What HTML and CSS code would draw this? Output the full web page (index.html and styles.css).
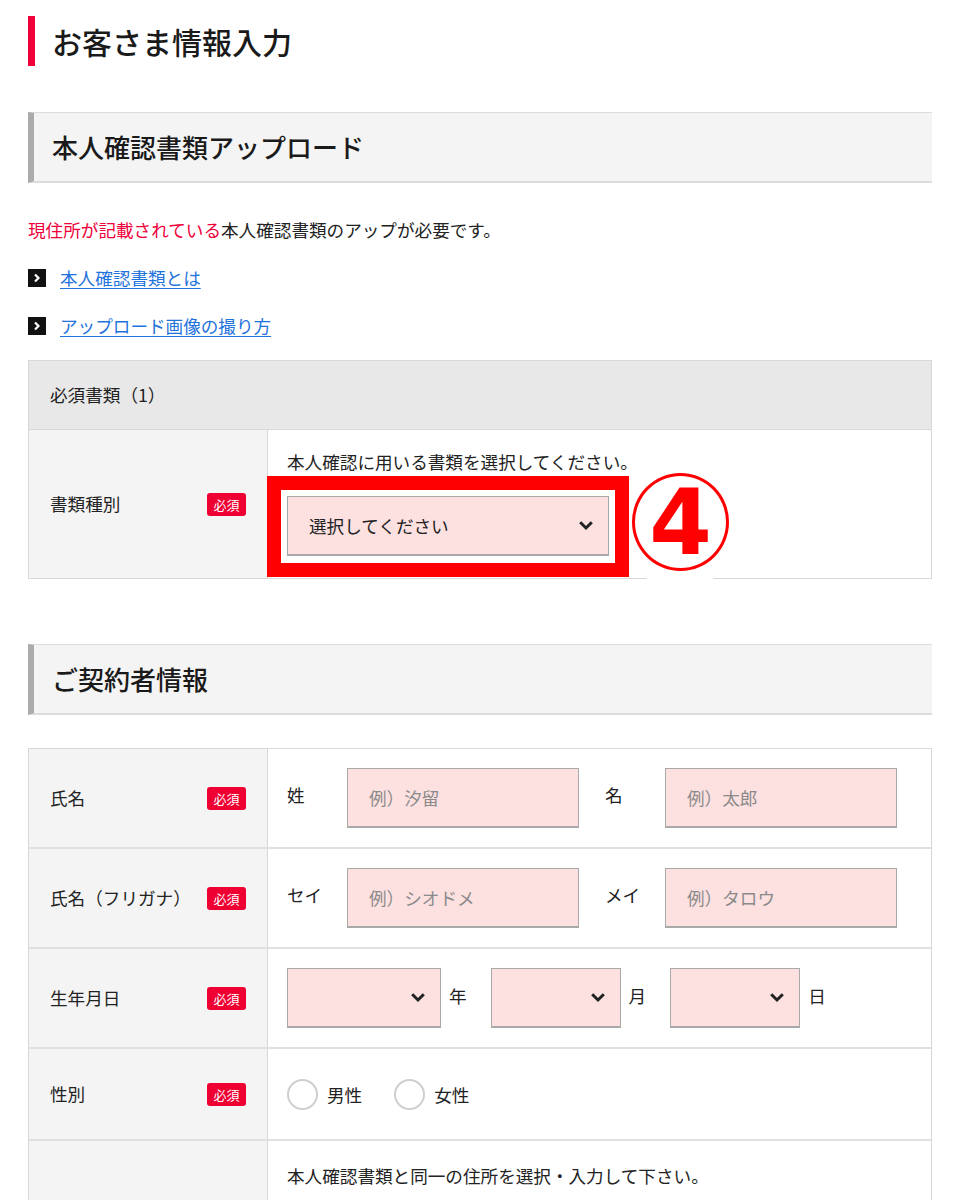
FILE: index.html
```html
<!DOCTYPE html>
<html lang="ja">
<head>
<meta charset="utf-8">
<title>お客さま情報入力</title>
<link rel="stylesheet" href="styles.css">
</head>
<body>
<main class="page">
  <h1 class="page-title">お客さま情報入力</h1>

  <section class="section">
    <h2 class="sec-head">本人確認書類アップロード</h2>
    <p class="note"><span class="em-red">現住所が記載されている</span>本人確認書類のアップが必要です。</p>
    <ul class="links">
      <li><span class="arrow-ic"><svg viewBox="0 0 18 18" width="18" height="18"><path d="M7 5.5 L10.5 9 L7 12.5" fill="none" stroke="#fff" stroke-width="2.2"/></svg></span><a href="#">本人確認書類とは</a></li>
      <li><span class="arrow-ic"><svg viewBox="0 0 18 18" width="18" height="18"><path d="M7 5.5 L10.5 9 L7 12.5" fill="none" stroke="#fff" stroke-width="2.2"/></svg></span><a href="#">アップロード画像の撮り方</a></li>
    </ul>

    <div class="ftable">
      <div class="ft-head">必須書類（1）</div>
      <div class="ft-row">
        <div class="ft-label"><span>書類種別</span><span class="badge">必須</span></div>
        <div class="ft-value doc-value">
          <p class="hint">本人確認に用いる書類を選択してください。</p>
          <div class="mark-wrap">
            <div class="select sel-doc"><span>選択してください</span><svg class="chev" viewBox="0 0 16 11" width="16" height="11"><path d="M2.2 2.2 L8 8 L13.8 2.2" fill="none" stroke="#222" stroke-width="3"/></svg></div>
          </div>
          <div class="halo"></div>
          <div class="num-mark"><span class="num-text">4</span></div>
        </div>
      </div>
    </div>
  </section>

  <section class="section">
    <h2 class="sec-head sec-head2">ご契約者情報</h2>
    <div class="ftable ftable2">
      <div class="ft-row">
        <div class="ft-label"><span>氏名</span><span class="badge">必須</span></div>
        <div class="ft-value name-grid">
          <span class="sub">姓</span><div class="input">例）汐留</div>
          <span class="sub sub2">名</span><div class="input">例）太郎</div>
        </div>
      </div>
      <div class="ft-row">
        <div class="ft-label"><span>氏名（フリガナ）</span><span class="badge">必須</span></div>
        <div class="ft-value name-grid">
          <span class="sub">セイ</span><div class="input">例）シオドメ</div>
          <span class="sub sub2">メイ</span><div class="input">例）タロウ</div>
        </div>
      </div>
      <div class="ft-row">
        <div class="ft-label"><span>生年月日</span><span class="badge">必須</span></div>
        <div class="ft-value date-row">
          <div class="select sel-y"><svg class="chev" viewBox="0 0 16 11" width="16" height="11"><path d="M2.2 2.2 L8 8 L13.8 2.2" fill="none" stroke="#222" stroke-width="3"/></svg></div><span class="unit">年</span>
          <div class="select sel-md"><svg class="chev" viewBox="0 0 16 11" width="16" height="11"><path d="M2.2 2.2 L8 8 L13.8 2.2" fill="none" stroke="#222" stroke-width="3"/></svg></div><span class="unit">月</span>
          <div class="select sel-md"><svg class="chev" viewBox="0 0 16 11" width="16" height="11"><path d="M2.2 2.2 L8 8 L13.8 2.2" fill="none" stroke="#222" stroke-width="3"/></svg></div><span class="unit">日</span>
        </div>
      </div>
      <div class="ft-row">
        <div class="ft-label"><span>性別</span><span class="badge">必須</span></div>
        <div class="ft-value radio-row">
          <label class="radio"><span class="radio-dot"></span>男性</label>
          <label class="radio"><span class="radio-dot"></span>女性</label>
        </div>
      </div>
      <div class="ft-row">
        <div class="ft-label"></div>
        <div class="ft-value addr-value">
          <p class="hint">本人確認書類と同一の住所を選択・入力して下さい。</p>
        </div>
      </div>
    </div>
  </section>
</main>
</body>
</html>
```

FILE: styles.css
```css
* { box-sizing: border-box; }

body {
  margin: 0;
  background: #fff;
  color: #222;
  font-family: "Noto Sans CJK JP", "Noto Sans", sans-serif;
  font-size: 17.6px;
  line-height: 28px;
}

.page {
  margin: 0 30px 0 28px;
  padding-top: 16px;
}

.page-title {
  margin: 0;
  border-left: 7px solid #f0003a;
  padding-left: 17px;
  height: 50px;
  line-height: 50px;
  font-size: 30px;
  font-weight: 500;
  color: #1a1a1a;
}

.sec-head {
  margin: 46px 0 0;
  height: 71px;
  background: #f4f4f4;
  border-top: 1px solid #dcdcdc;
  border-bottom: 2px solid #dcdcdc;
  border-left: 6px solid #ababab;
  padding-left: 18px;
  display: flex;
  align-items: center;
  font-size: 26px;
  font-weight: 500;
  color: #1a1a1a;
}

.sec-head2 { margin-top: 65px; }

.note {
  margin: 33px 0 0;
}
.em-red { color: #f0003a; }

.links {
  list-style: none;
  margin: 20px 0 0;
  padding: 0;
  display: flex;
  flex-direction: column;
  gap: 20px;
}
.links li {
  display: flex;
  align-items: center;
  height: 28px;
}
.arrow-ic {
  width: 18px;
  height: 18px;
  background: #111;
  display: inline-flex;
  margin-right: 14px;
}
.links a {
  color: #1f73dc;
  text-decoration: underline;
  text-underline-offset: 3px;
}

.ftable {
  margin-top: 20px;
  border: 1px solid #d8d8d8;
}
.ftable2 { margin-top: 33px; }

.ft-head {
  height: 69px;
  background: #e8e8e8;
  border-bottom: 1px solid #d8d8d8;
  padding-left: 21px;
  display: flex;
  align-items: center;
  font-size: 17.6px;
}

.ft-row {
  display: grid;
  grid-template-columns: 239px 1fr;
  border-bottom: 2px solid #e0e0e0;
}
.ft-row:last-child { border-bottom: 0; }

.ft-label {
  background: #f4f4f4;
  border-right: 1px solid #d8d8d8;
  display: flex;
  align-items: center;
  justify-content: space-between;
  padding: 0 21px;
}

.badge {
  width: 39px;
  height: 23px;
  border-radius: 3px;
  background: #ee0033;
  color: #fff;
  font-size: 13px;
  line-height: 23px;
  text-align: center;
}

.ft-value {
  padding: 19px 19px 19px;
  position: relative;
}

.hint { margin: 0; }

.doc-value { padding-top: 18px; padding-bottom: 22px; }

.mark-wrap {
  margin-top: 20px;
  position: relative;
  width: 322px;
}
.mark-wrap::after {
  content: "";
  position: absolute;
  left: -20px;
  right: -20px;
  top: -20px;
  bottom: -21px;
  border: 14px solid #ff0000;
  z-index: 3;
}

.select {
  height: 60px;
  background: #fde0e0;
  border: 1px solid #a9a9a9;
  border-bottom-width: 2px;
  display: flex;
  align-items: center;
  justify-content: space-between;
  padding: 0 14px 0 21px;
  position: relative;
}
.select .chev { margin-left: auto; }

.sel-doc { width: 322px; }

.halo {
  position: absolute;
  left: 348px;
  top: 30px;
  width: 128px;
  height: 128px;
  border-radius: 50%;
  background: radial-gradient(circle, #fff 80%, rgba(255,255,255,0.6) 92%, rgba(255,255,255,0) 100%);
  z-index: 1;
}
.num-mark {
  position: absolute;
  left: 364px;
  top: 43px;
  width: 97px;
  height: 98px;
  border: 3.5px solid #f00;
  border-radius: 50%;
  background: #fff;
  display: flex;
  align-items: center;
  justify-content: center;
  z-index: 2;
}
.num-text {
  font-family: "DejaVu Sans", sans-serif;
  font-weight: 700;
  font-size: 90px;
  line-height: 90px;
  color: #f00;
  margin-top: 2px;
}

.name-grid {
  display: grid;
  grid-template-columns: 60px 232px 26px 60px 232px;
  align-items: center;
}
.name-grid .sub2 { grid-column: 4; }
.sub { align-self: center; margin-top: -6px; }

.input {
  height: 60px;
  background: #fde0e0;
  border: 1px solid #a9a9a9;
  border-bottom-width: 2px;
  padding-left: 21px;
  display: flex;
  align-items: center;
  color: #8a8a8a;
}

.date-row {
  display: flex;
  align-items: center;
}
.sel-y { width: 154px; }
.sel-md { width: 130px; }
.unit { margin-left: 8px; margin-right: 24px; margin-top: -4px; }

.radio-row {
  display: flex;
  align-items: center;
  padding-top: 30px;
  padding-bottom: 29px;
  gap: 32px;
}
.radio {
  display: flex;
  align-items: center;
  gap: 9px;
}
.radio-dot {
  width: 31px;
  height: 31px;
  border-radius: 50%;
  border: 2px solid #cfcfcf;
  background: #fff;
}

.addr-value {
  padding-top: 21px;
  height: 140px;
}
```
